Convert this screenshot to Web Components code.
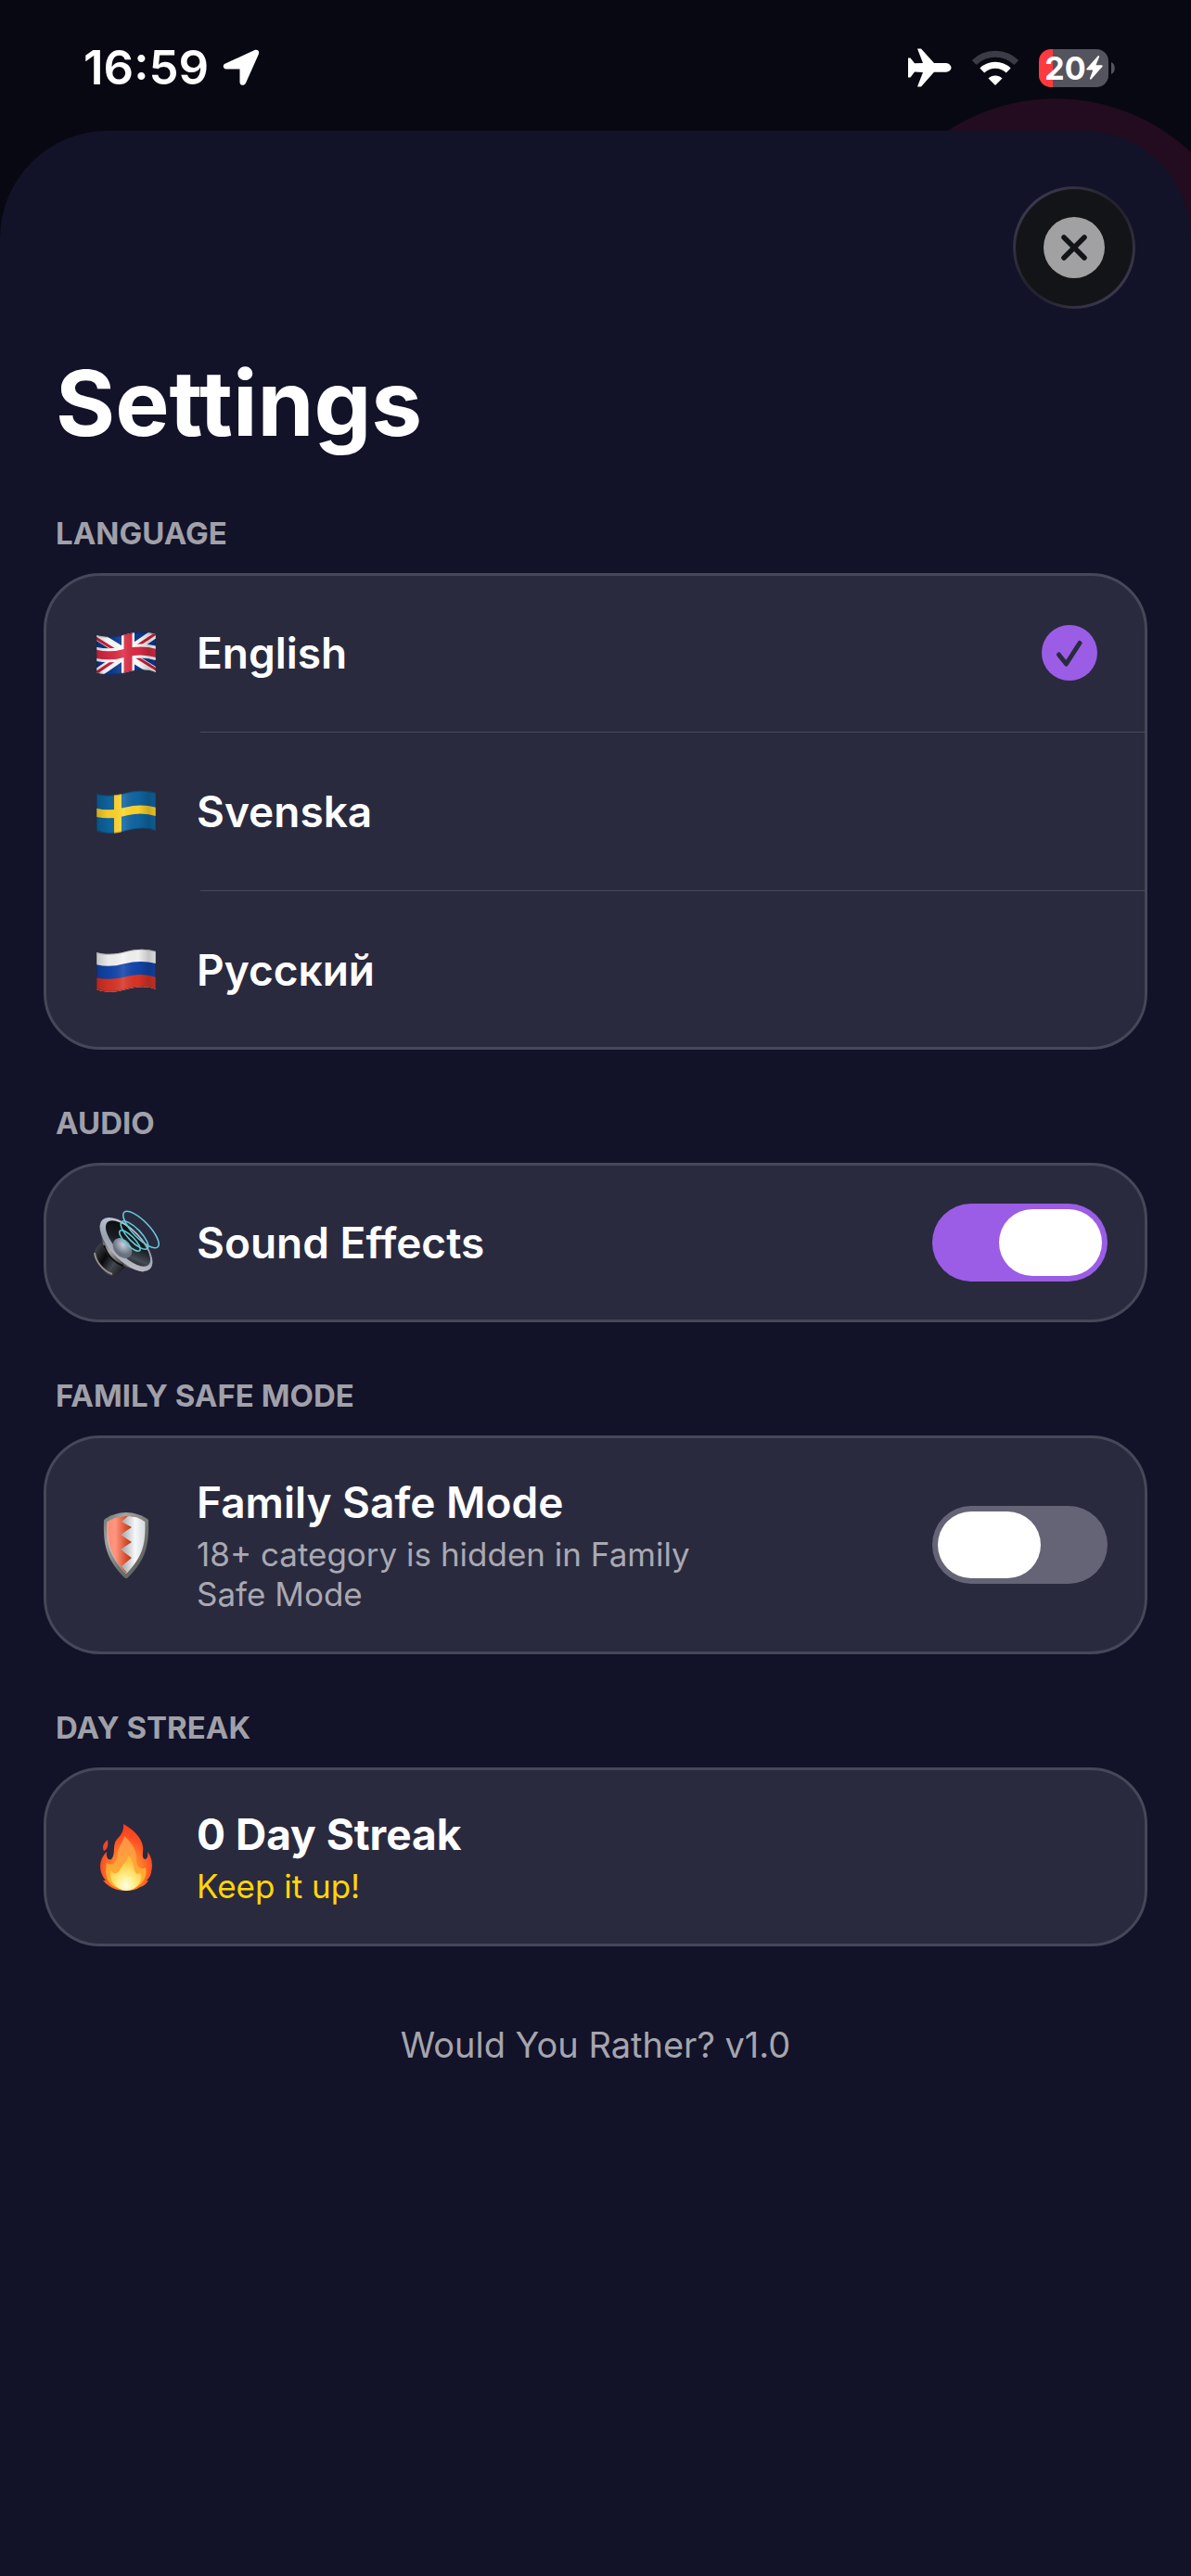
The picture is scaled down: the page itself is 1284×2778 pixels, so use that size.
<!DOCTYPE html>
<html lang="en">
<head>
<meta charset="utf-8">
<meta name="viewport" content="width=device-width, initial-scale=1">
<title>Settings</title>
<style>
    html{
        min-height: 100%;
        background: #080812;
    }
    body{
        margin: 0;
        min-height: 100vh;
        display: flex;
        flex-direction: column;
        font-family: Inter, 'Noto Sans', sans-serif;
        color: #fff;
        /* glow that peeks out behind the sheet */
        background: radial-gradient(circle at calc(100% - 146px) 319px, #230c1f 212px, #080812 213px);
    }
    settings-sheet{
        flex: 1;
    }
</style>
</head>
<body>

<status-bar time="16:59" battery="20"></status-bar>

<settings-sheet heading="Settings">
    <settings-group heading="LANGUAGE">
        <language-picker value="en"></language-picker>
    </settings-group>
    <settings-group heading="AUDIO">
        <settings-row icon="speaker" toggle checked>Sound Effects</settings-row>
    </settings-group>
    <settings-group heading="FAMILY SAFE MODE">
        <settings-row icon="shield" toggle>Family Safe Mode<span slot="detail">18+ category is hidden in Family Safe Mode</span></settings-row>
    </settings-group>
    <settings-group heading="DAY STREAK">
        <settings-row icon="fire" class="streak">0 Day Streak<span slot="detail">Keep it up!</span></settings-row>
    </settings-group>
    <span slot="footer">Would You Rather? v1.0</span>
</settings-sheet>

<script>
function makeTemplate(html){
    const template = document.createElement('template');
    template.innerHTML = html;
    return template;
}

/* ---------- emoji-icon ---------- */

// the flags share one waving outline, shading goes on top
const wave = 'M4 17 C14 20 26 19 36 16 C48 13 58 13 68 16 V57 C58 53 48 54 36 57 C26 60 14 61 4 57 Z';
const middle = 'M2 37 C14 40 26 39 36 36 C48 33 58 33 70 37';

function flag(stripes){
    return `
        <defs>
            <clipPath id="cloth"><path d="${wave}"/></clipPath>
            <linearGradient id="fold">
                <stop offset="0" stop-color="#000" stop-opacity="0.2"/>
                <stop offset="0.2" stop-color="#000" stop-opacity="0.04"/>
                <stop offset="0.45" stop-color="#fff" stop-opacity="0.12"/>
                <stop offset="0.7" stop-color="#000" stop-opacity="0.02"/>
                <stop offset="0.88" stop-color="#000" stop-opacity="0.2"/>
                <stop offset="1" stop-color="#000" stop-opacity="0.1"/>
            </linearGradient>
        </defs>
        <g clip-path="url(#cloth)">
            ${stripes}
            <path d="${wave}" fill="url(#fold)"/>
            <path d="${wave}" fill="none" stroke="#000" stroke-opacity="0.18" stroke-width="2"/>
        </g>`;
}

const icons = {
    gb: flag(`
        <rect width="72" height="72" fill="#0b3a93"/>
        <path d="M2 16 L70 58 M2 60 L70 13" stroke="#fff" stroke-width="10"/>
        <path d="M3 20 L34 39 M38 35 L70 55 M3 58 L34 37 M38 35 L70 14" stroke="#d31f3a" stroke-width="3"/>
        <path d="M38 8 V64" stroke="#fff" stroke-width="14"/>
        <path d="${middle}" stroke="#fff" stroke-width="15" fill="none"/>
        <path d="M38 8 V64" stroke="#dc2c45" stroke-width="9"/>
        <path d="${middle}" stroke="#dc2c45" stroke-width="9" fill="none"/>`),
    se: flag(`
        <rect width="72" height="72" fill="#0f66a3"/>
        <path d="M27 8 V64" stroke="#ffd52b" stroke-width="8"/>
        <path d="${middle}" stroke="#ffd52b" stroke-width="9" fill="none"/>`),
    ru: flag(`
        <rect width="72" height="72" fill="#f4f4f4"/>
        <path d="M2 51 C14 54 26 53 36 50 C48 47 58 47 70 51" stroke="#da3426" stroke-width="16" fill="none"/>
        <path d="${middle}" stroke="#1245ac" stroke-width="14" fill="none"/>`),
    speaker: `
        <defs>
            <linearGradient id="rim" x1="0" y1="0" x2="1" y2="1">
                <stop offset="0" stop-color="#cfd6e4"/>
                <stop offset="0.5" stop-color="#9aa2b2"/>
                <stop offset="1" stop-color="#c9c6cb"/>
            </linearGradient>
            <linearGradient id="magnet" x1="0" y1="0" x2="1" y2="0.7">
                <stop offset="0" stop-color="#6b6e72"/>
                <stop offset="0.2" stop-color="#35383c"/>
                <stop offset="0.45" stop-color="#08090a"/>
                <stop offset="0.7" stop-color="#44484e"/>
                <stop offset="1" stop-color="#15171a"/>
            </linearGradient>
            <linearGradient id="neck" x1="0" y1="0" x2="1" y2="1">
                <stop offset="0" stop-color="#26292d"/>
                <stop offset="0.35" stop-color="#a9a4a4"/>
                <stop offset="0.65" stop-color="#4a4848"/>
                <stop offset="1" stop-color="#c5bebc"/>
            </linearGradient>
            <linearGradient id="cone" x1="0" y1="0" x2="1" y2="1">
                <stop offset="0" stop-color="#050607"/>
                <stop offset="0.5" stop-color="#1b1e22"/>
                <stop offset="0.75" stop-color="#454c54"/>
                <stop offset="1" stop-color="#090b0d"/>
            </linearGradient>
            <radialGradient id="dome" cx="0.4" cy="0.35">
                <stop offset="0" stop-color="#c5cfdf"/>
                <stop offset="1" stop-color="#69717f"/>
            </radialGradient>
        </defs>
        <path d="M9 36 L3 43 C-2 51 10 69 20 72 C24 72 27 71 29 68 L38 60 L18 32 Z" fill="url(#magnet)"/>
        <path d="M2 47 C3 57 12 67 21 70" fill="none" stroke="#99918c" stroke-width="2"/>
        <path d="M8 24 L12 42 C16 51 25 60 33 61 L55 68 Z" fill="url(#neck)"/>
        <path d="M12 39 C16 50 24 58 33 61" fill="none" stroke="#0c0d0f" stroke-width="2"/>
        <ellipse cx="36" cy="38" rx="37" ry="17" transform="rotate(46 36 38)" fill="url(#rim)"/>
        <ellipse cx="38" cy="37" rx="32" ry="13" transform="rotate(46 38 37)" fill="url(#cone)"/>
        <ellipse cx="32" cy="42" rx="12" ry="9" transform="rotate(50 32 42)" fill="url(#dome)"/>
        <g fill="none" stroke="#62cbd9" stroke-width="1.6">
            <ellipse cx="40" cy="34" rx="15" ry="5" transform="rotate(45 40 34)"/>
            <ellipse cx="45" cy="28" rx="20" ry="7" transform="rotate(46 45 28)"/>
            <ellipse cx="52" cy="22" rx="26" ry="9" transform="rotate(46 52 22)"/>
        </g>`,
    shield: `
        <defs>
            <linearGradient id="red">
                <stop offset="0" stop-color="#ff8a73"/>
                <stop offset="0.3" stop-color="#ff967f"/>
                <stop offset="0.7" stop-color="#d9502f"/>
                <stop offset="1" stop-color="#a83219"/>
            </linearGradient>
            <linearGradient id="silver">
                <stop offset="0" stop-color="#9da1a4"/>
                <stop offset="0.6" stop-color="#f6f8fa"/>
                <stop offset="1" stop-color="#d5dade"/>
            </linearGradient>
            <linearGradient id="steel" x1="0" y1="0" x2="1" y2="1">
                <stop offset="0" stop-color="#6a6c6b"/>
                <stop offset="0.25" stop-color="#a3a5a4"/>
                <stop offset="0.6" stop-color="#70736f"/>
                <stop offset="1" stop-color="#555856"/>
            </linearGradient>
        </defs>
        <path d="M36 1 C44 1 54 4 60 9 C61 37 57 53 36 73 C15 53 11 37 12 9 C18 4 28 1 36 1 Z" fill="url(#steel)"/>
        <path d="M40 5 C30 5 22 7 16 11 C15 36 19 49 37 67 L44 50 V5 Z" fill="url(#red)"/>
        <path d="M38 5 C45 5 51 7 56 11 C57 36 53 49 37 66 L31 59 L42 50 L30 41 L42 33 L30 25 L42 17 L31 11 Z" fill="url(#silver)"/>
        <path d="M16 11 C15 36 19 49 36 67 C53 49 57 36 56 11" fill="none" stroke="#fff" stroke-opacity="0.4" stroke-width="1"/>`,
    fire: `
        <defs>
            <radialGradient id="outer" cx="0.5" cy="0.7" r="0.75">
                <stop offset="0" stop-color="#ffa938"/>
                <stop offset="0.4" stop-color="#ff7b2c"/>
                <stop offset="0.65" stop-color="#ff5022"/>
                <stop offset="1" stop-color="#f4361d"/>
            </radialGradient>
            <linearGradient id="mid" x1="0" y1="0" x2="0" y2="1">
                <stop offset="0" stop-color="#ff9245"/>
                <stop offset="0.5" stop-color="#ffa33b"/>
                <stop offset="1" stop-color="#ffb91f"/>
            </linearGradient>
            <radialGradient id="core" cx="0.5" cy="0.85" r="0.7">
                <stop offset="0" stop-color="#fffde8"/>
                <stop offset="0.4" stop-color="#fff08a"/>
                <stop offset="1" stop-color="#ffc03a"/>
            </radialGradient>
        </defs>
        <path d="M16 17 C11 21 10 25 12 29 C16 27 17 23 16 17 Z" fill="#f2452a"/>
        <path d="M33 0 C43 6 52 13 54 24 C55 30 52 36 56 38 C59 38 60 34 59 30 C64 36 65 44 63 52 C62 57 60 59 58 61 L60 61 C57 66 54 67 51 68 C47 71 41 72 36 72 C25 72 17 68 11 61 L14 61 C6 52 6 39 15 30 C14 36 17 40 20 38 C24 34 22 27 24 20 C27 13 34 12 33 0 Z" fill="url(#outer)"/>
        <path d="M34 13 C33 20 27 24 27 33 C26 42 20 46 15 42 C13 50 14 61 21 66 C30 73 46 73 54 62 C58 56 58 52 57 47 C51 50 47 45 47 39 C48 29 42 20 34 13 Z" fill="url(#mid)"/>
        <path d="M38 34 C37 42 32 43 29 50 C26 55 22 54 20 50 C16 59 24 71 36 72 C47 72 56 60 51 53 C47 56 45 51 44 46 C43 41 42 37 38 34 Z" fill="url(#core)"/>`
};

class EmojiIcon extends HTMLElement{
    constructor(){
        super()
        this.attachShadow({mode:'open'});
    }

    connectedCallback(){
        this.shadowRoot.innerHTML = `
            <style>
                :host{
                    display: block;
                    flex: none;
                    width: 72px;
                    height: 72px;
                }
                svg{
                    display: block;
                    width: 100%;
                    height: 100%;
                }
            </style>
            <svg viewBox="0 0 72 72" aria-hidden="true">${icons[this.getAttribute('name')]}</svg>`;
    }
}

/* ---------- status-bar ---------- */

const statusTemplate = makeTemplate(`
    <style>
        :host{
            display: flex;
            align-items: center;
            justify-content: space-between;
            padding: 43px 82px 38px 90px;
            line-height: 60px;
        }
        .left, .right{
            display: flex;
            align-items: center;
        }
        .left{
            gap: 15px;
            font-size: 51px;
            font-weight: 600;
        }
        .right{
            gap: 21px;
        }
        svg{
            display: block;
            flex: none;
        }
        .battery{
            display: flex;
            align-items: center;
            gap: 3px;
        }
        .cell{
            display: flex;
            align-items: center;
            justify-content: center;
            box-sizing: border-box;
            width: 75px;
            height: 41px;
            border-radius: 13px;
            background: linear-gradient(90deg, #ff3a3f 20%, #54545e 20%);
            font-size: 34px;
            font-weight: 700;
            line-height: 41px;
        }
    </style>
    <div class="left">
        <span id="time"></span>
        <svg width="40" height="40" viewBox="0 0 40 40" fill="#fff"><path d="M3 15.500 L34 1.200 C37.500 -0.200 40.200 2 38.800 5.500 L25 36.500 C23.400 40 18.500 39.500 18.500 35.500 V21.500 H4 C0.200 21.500 -0.500 17 3 15.500 Z"/></svg>
    </div>
    <div class="right">
        <svg width="47" height="42" viewBox="0 0 47 42" fill="#fff"><path d="M0 10.500 H2.500 L7 16.300 L16 16 L10 0.500 H14 L28 16 H41 C44 16.300 46.500 18.500 46.500 21 C46.500 23.500 44 25.500 41 25.800 H28 L14 41.500 H10 L16 26 L7 25.500 L2.500 31.500 H0 Z"/></svg>
        <svg width="52" height="38" viewBox="0 0 52 38" fill="none" stroke-width="7">
            <path d="M3.200 13.500 A33 33 0 0 1 48.800 13.500" stroke="#3b3b45"/>
            <path d="M11.800 22 A20.500 20.500 0 0 1 40.200 22" stroke="#fff"/>
            <path d="M26 38 L18.500 30.500 A10.600 10.600 0 0 1 33.500 30.500 Z" fill="#fff"/>
        </svg>
        <div class="battery">
            <div class="cell"><span id="level"></span><svg width="18" height="26" viewBox="0 0 18 26" fill="#fff"><path d="M12.500 0.500 L0.500 14 C0 15 0.300 15.600 1.300 15.600 H7.300 L4 24.500 C3.800 25.800 4.800 26.200 5.600 25.300 L17.300 12 C18 11 17.700 10.300 16.700 10.300 H10.500 L14 1.600 C14.400 0.300 13.300 -0.400 12.500 0.500 Z"/></svg></div>
            <svg width="4" height="13" viewBox="0 0 4 13"><path d="M0 0 C5 2 5 11 0 13 Z" fill="#54545e"/></svg>
        </div>
    </div>
`);

class StatusBar extends HTMLElement{
    constructor(){
        super()
        this.attachShadow({mode:'open'});
        this.shadowRoot.appendChild(statusTemplate.content.cloneNode(true));
        this.shadowRoot.getElementById('time').textContent = this.getAttribute('time');
        this.shadowRoot.getElementById('level').textContent = this.getAttribute('battery');
    }
}

/* ---------- settings-sheet ---------- */

const sheetTemplate = makeTemplate(`
    <style>
        :host{
            display: block;
            padding: 60px 48px;
            border-radius: 116px 116px 0 0;
            background: #121229;
        }
        header{
            display: flex;
            justify-content: flex-end;
            padding: 0 12px;
        }
        button{
            display: flex;
            align-items: center;
            justify-content: center;
            width: 132px;
            height: 132px;
            padding: 0;
            border: 3px solid transparent;
            border-radius: 50%;
            background:
                linear-gradient(#131417, #131417) padding-box,
                linear-gradient(135deg, #3d3b52 10%, #23232d 45%, #23232d 55%, #3d3b52 90%) border-box;
            cursor: pointer;
        }
        h1{
            margin: 42px 12px 0;
            font-size: 98px;
            font-weight: 700;
            line-height: 120px;
        }
        footer{
            margin-top: 83px;
            text-align: center;
            font-size: 38px;
            line-height: 48px;
            color: #a5a5ad;
        }
    </style>
    <header>
        <button type="button" aria-label="Close">
            <svg width="66" height="66" viewBox="0 0 66 66">
                <circle cx="33" cy="33" r="33" fill="#a1a1a3"/>
                <path d="M22 22 L44 44 M44 22 L22 44" stroke="#131417" stroke-width="5.500" stroke-linecap="round"/>
            </svg>
        </button>
    </header>
    <h1></h1>
    <slot></slot>
    <footer><slot name="footer"></slot></footer>
`);

class SettingsSheet extends HTMLElement{
    constructor(){
        super()
        this.attachShadow({mode:'open'});
        this.shadowRoot.appendChild(sheetTemplate.content.cloneNode(true));
        this.shadowRoot.querySelector('h1').textContent = this.getAttribute('heading');
    }
}

/* ---------- settings-group ---------- */

const groupTemplate = makeTemplate(`
    <style>
        :host{
            display: block;
            margin-top: 60px;
        }
        h2{
            margin: 0 12px 24px;
            font-size: 33px;
            font-weight: 700;
            line-height: 40px;
            color: #a0a0a9;
        }
        .card{
            border-radius: 60px;
            background: #2a2a3f;
            outline: 3px solid #474759;
            outline-offset: -2px;
        }
    </style>
    <h2></h2>
    <div class="card"><slot></slot></div>
`);

class SettingsGroup extends HTMLElement{
    constructor(){
        super()
        this.attachShadow({mode:'open'});
        this.shadowRoot.appendChild(groupTemplate.content.cloneNode(true));
        this.shadowRoot.querySelector('h2').textContent = this.getAttribute('heading');
    }
}

/* ---------- language-picker ---------- */

const languages = [
    {code: 'en', icon: 'gb', name: 'English'},
    {code: 'sv', icon: 'se', name: 'Svenska'},
    {code: 'ru', icon: 'ru', name: 'Русский'}
];

const pickerTemplate = makeTemplate(`
    <style>
        :host{
            display: block;
        }
        label{
            display: flex;
            align-items: center;
            gap: 40px;
            height: 170px;
            padding: 0 53px 0 52px;
            font-size: 46px;
            font-weight: 600;
            line-height: 58px;
            cursor: pointer;
        }
        hr{
            height: 1px;
            margin: 0 0 0 168px;
            border: 0;
            background: #4a4a58;
        }
        .name{
            flex: 1;
        }
        input{
            appearance: none;
            flex: none;
            width: 60px;
            height: 60px;
            margin: 0;
            border-radius: 50%;
        }
        svg{
            display: none;
            flex: none;
        }
        .pick{
            display: grid;
        }
        .pick > *{
            grid-area: 1 / 1;
            pointer-events: none;
        }
        input:checked + svg{
            display: block;
        }
    </style>
`);

class LanguagePicker extends HTMLElement{
    constructor(){
        super()
        this.attachShadow({mode:'open'});
        this.shadowRoot.appendChild(pickerTemplate.content.cloneNode(true));
        const rows = languages.map(({code, icon, name}) => `
            <label>
                <emoji-icon name="${icon}"></emoji-icon>
                <span class="name" lang="${code}">${name}</span>
                <span class="pick">
                    <input type="radio" name="language" value="${code}" ${code === this.getAttribute('value') ? 'checked' : ''}>
                    <svg width="60" height="60" viewBox="0 0 60 60">
                        <circle cx="30" cy="30" r="30" fill="#9b5de5"/>
                        <path d="M18.500 32 L26.500 42 L41 19.500" fill="none" stroke="#2a2a3f" stroke-width="5" stroke-linecap="round" stroke-linejoin="round"/>
                    </svg>
                </span>
            </label>`);
        this.shadowRoot.appendChild(makeTemplate(rows.join('<hr>')).content);
    }
}

/* ---------- settings-row ---------- */

const rowTemplate = makeTemplate(`
    <style>
        :host{
            display: flex;
            align-items: center;
            gap: 40px;
            box-sizing: border-box;
            min-height: 170px;
            padding: 42px 42px 42px 52px;
        }
        .text{
            flex: 1;
            display: flex;
            flex-direction: column;
            gap: 6px;
            font-size: 46px;
            font-weight: 600;
            line-height: 58px;
        }
        :host(.streak) .text{
            font-weight: 700;
        }
        ::slotted(span){
            display: block;
            max-width: 560px;
            font-size: 35px;
            font-weight: 400;
            line-height: 43px;
            color: #a9a9b2;
        }
        :host(.streak) ::slotted(span){
            color: #ffd60a;
        }
        input{
            appearance: none;
            display: flex;
            flex: none;
            box-sizing: border-box;
            width: 189px;
            height: 84px;
            margin: 0;
            padding: 6px;
            border-radius: 42px;
            background: #656376;
            cursor: pointer;
        }
        input::before{
            content: '';
            width: 111px;
            border-radius: 36px;
            background: #fff;
        }
        input:checked{
            justify-content: flex-end;
            background: #9b5de5;
        }
    </style>
    <emoji-icon></emoji-icon>
    <div class="text">
        <label for="control"><slot></slot></label>
        <slot name="detail"></slot>
    </div>
    <input id="control" type="checkbox" role="switch">
`);

class SettingsRow extends HTMLElement{
    constructor(){
        super()
        this.attachShadow({mode:'open'});
        const content = rowTemplate.content.cloneNode(true);
        const control = content.getElementById('control');
        content.querySelector('emoji-icon').setAttribute('name', this.getAttribute('icon'));
        if(this.hasAttribute('toggle')){
            control.checked = this.hasAttribute('checked');
        }else{
            control.remove();
            content.querySelector('label').removeAttribute('for');
        }
        this.shadowRoot.appendChild(content);
    }
}


window.customElements.define('emoji-icon',EmojiIcon)
window.customElements.define('status-bar',StatusBar)
window.customElements.define('settings-sheet',SettingsSheet)
window.customElements.define('settings-group',SettingsGroup)
window.customElements.define('language-picker',LanguagePicker)
window.customElements.define('settings-row',SettingsRow)
</script>
</body>
</html>
